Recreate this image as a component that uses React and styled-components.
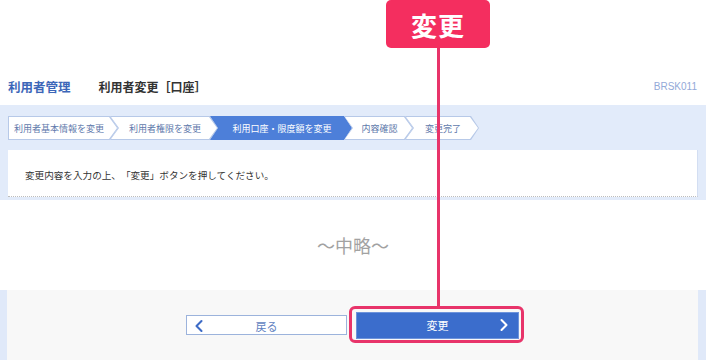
import React from "react";
import styled, { createGlobalStyle } from "styled-components";
import { ChevronLeft, ChevronRight } from "lucide-react";

const GlobalStyle = createGlobalStyle`
  body {
    margin: 0;
    background: #ffffff;
    font-family: "Noto Sans CJK JP", "Noto Sans", sans-serif;
    text-spacing-trim: space-all;
  }
`;

const StPage = styled.div`
  position: relative;
  width: 706px;
  height: 360px;
  overflow: hidden;
  background: #ffffff;
`;

const StHeader = styled.div`
  display: flex;
  align-items: center;
  height: 38px;
  margin-top: 67px;
  padding: 0 9px 0 8px;
`;

const StSection = styled.span`
  font-size: 12.5px;
  font-weight: bold;
  color: #3c66b8;
  margin-right: 28px;
`;

const StTitle = styled.span`
  font-size: 12px;
  font-weight: bold;
  color: #333333;
`;

const StScreenId = styled.span`
  margin-left: auto;
  font-family: "Liberation Sans", Arial, sans-serif;
  font-size: 10px;
  color: #93a9d8;
`;

const StBlueArea = styled.div`
  background: #e2ebfa;
  padding: 11px 8px 0 8px;
  height: 95px;
  box-sizing: border-box;
`;

const StSteps = styled.div`
  display: flex;
  height: 24px;
`;

const arrowClip = "polygon(0 0, calc(100% - 8px) 0, 100% 50%, calc(100% - 8px) 100%, 0 100%)";
const notchClip =
  "polygon(0 0, calc(100% - 8px) 0, 100% 50%, calc(100% - 8px) 100%, 0 100%, 8px 50%)";

const StStep = styled.div`
  position: relative;
  z-index: 0;
  display: flex;
  align-items: center;
  justify-content: center;
  box-sizing: border-box;
  width: ${(p) => p.$w}px;
  margin-left: ${(p) => (p.$first ? 0 : -8)}px;
  padding: ${(p) => (p.$first ? "0 8px 0 0" : "0 8px 0 10px")};
  font-size: 9px;
  white-space: nowrap;
  color: ${(p) => (p.$active ? "#ffffff" : "#6079ab")};
  background: ${(p) => (p.$active ? "#4d7fd9" : "#b7c9e8")};
  clip-path: ${(p) => (p.$first ? arrowClip : notchClip)};

  &::before {
    content: "";
    position: absolute;
    inset: 1px;
    z-index: -1;
    background: ${(p) => (p.$active ? "#4d7fd9" : "#ffffff")};
    clip-path: ${(p) => (p.$first ? arrowClip : notchClip)};
  }
`;

const StPanel = styled.div`
  margin-top: 10px;
  background: #ffffff;
  border-right: 1px solid #d3def2;
  padding: 17px 17px 13px;
  border-bottom: 1px dotted #bdbdbd;
`;

const StMessage = styled.p`
  margin: 0;
  font-size: 9.6px;
  line-height: 16px;
  color: #333333;
`;

const StOmitted = styled.div`
  display: flex;
  align-items: center;
  justify-content: center;
  height: 90px;
  background: #ffffff;
  font-size: 18px;
  color: #a2a2a2;
`;

const StBottom = styled.div`
  height: 70px;
  background: #e0e9f9;
  padding: 0 8px 0 7px;
`;

const StFooter = styled.div`
  display: flex;
  align-items: center;
  justify-content: center;
  gap: 9px;
  height: 100%;
  background: #f8f8f8;
`;

const StButton = styled.button`
  display: grid;
  grid-template-columns: 20px 1fr 20px;
  align-items: center;
  box-sizing: border-box;
  width: ${(p) => (p.$primary ? 163 : 161)}px;
  height: ${(p) => (p.$primary ? 27 : 20)}px;
  padding: ${(p) => (p.$primary ? "0 4px" : "0 2px")};
  font-family: inherit;
  font-size: 11px;
  color: ${(p) => (p.$primary ? "#ffffff" : "#5f7fbf")};
  background: ${(p) => (p.$primary ? "#3b6dcc" : "#ffffff")};
  border: 1px solid ${(p) => (p.$primary ? "#6d93db" : "#9cb3dc")};
  cursor: pointer;

  svg {
    display: block;
    color: ${(p) => (p.$primary ? "#ffffff" : "#3d6bc6")};
  }
`;

const StLabel = styled.span`
  text-align: center;
`;

const StHighlight = styled.span`
  position: relative;
  display: block;

  &::after {
    content: "";
    position: absolute;
    inset: -6px -5px -4px -7px;
    border: 3px solid #e8346a;
    border-radius: 6px;
    pointer-events: none;
  }
`;

const StCallout = styled.div`
  position: absolute;
  left: 386px;
  top: 0;
  width: 104px;
  height: 48px;
  display: flex;
  align-items: center;
  justify-content: center;
  background: #f42e5f;
  border-radius: 5px;
  color: #ffffff;
  font-size: 26px;
  font-weight: bold;
  letter-spacing: 1px;
`;

const StCalloutLine = styled.div`
  position: absolute;
  left: 437px;
  top: 48px;
  width: 3px;
  height: 258px;
  background: #e8346a;
`;

const steps = [
  { label: "利用者基本情報を変更", w: 110 },
  { label: "利用者権限を変更", w: 108 },
  { label: "利用口座・限度額を変更", w: 142, active: true },
  { label: "内容確認", w: 69 },
  { label: "変更完了", w: 74 },
];

function App() {
  return (
    <>
      <GlobalStyle />
      <StPage>
        <StHeader>
          <StSection>利用者管理</StSection>
          <StTitle>利用者変更［口座］</StTitle>
          <StScreenId>BRSK011</StScreenId>
        </StHeader>

        <StBlueArea>
          <StSteps>
            {steps.map((s, i) => (
              <StStep key={s.label} $w={s.w} $first={i === 0} $active={s.active}>
                {s.label}
              </StStep>
            ))}
          </StSteps>
          <StPanel>
            <StMessage>変更内容を入力の上、「変更」ボタンを押してください。</StMessage>
          </StPanel>
        </StBlueArea>

        <StOmitted>〜中略〜</StOmitted>

        <StBottom>
          <StFooter>
            <StButton type="button">
              <ChevronLeft size={20} strokeWidth={2.5} />
              <StLabel>戻る</StLabel>
              <span />
            </StButton>
            <StHighlight>
              <StButton type="button" $primary>
                <span />
                <StLabel>変更</StLabel>
                <ChevronRight size={20} strokeWidth={2.5} />
              </StButton>
            </StHighlight>
          </StFooter>
        </StBottom>

        <StCallout>変更</StCallout>
        <StCalloutLine />
      </StPage>
    </>
  );
}

export default App;
